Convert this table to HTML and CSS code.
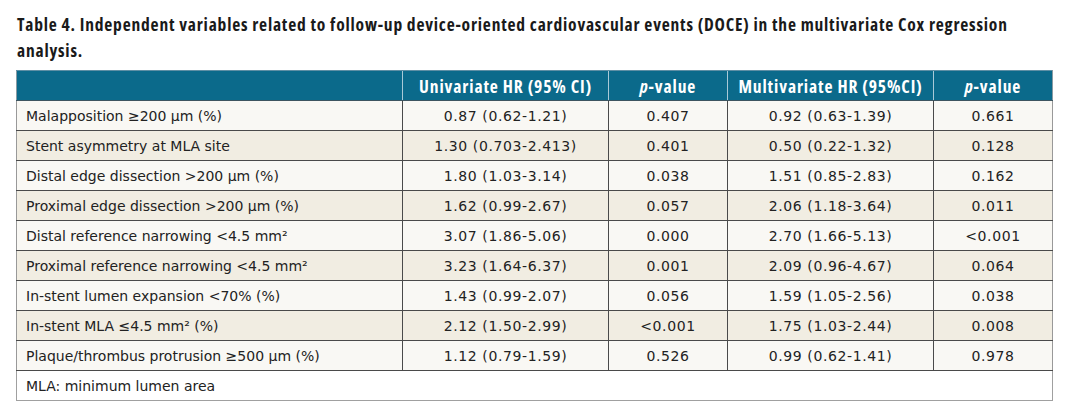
FILE: index.html
```html
<!DOCTYPE html>
<html>
<head>
<meta charset="utf-8">
<link rel="stylesheet" href="styles.css">
</head>
<body>
<div class="page">
  <h1 class="title">Table 4. Independent variables related to follow-up device-oriented cardiovascular events (DOCE) in the multivariate Cox regression analysis.</h1>
  <table class="tbl">
    <colgroup>
      <col class="c-var"><col class="c-hr"><col class="c-p"><col class="c-hr"><col class="c-p">
    </colgroup>
    <thead>
      <tr>
        <th></th>
        <th>Univariate HR (95% CI)</th>
        <th><i>p</i>-value</th>
        <th>Multivariate HR (95%CI)</th>
        <th><i>p</i>-value</th>
      </tr>
    </thead>
    <tbody>
      <tr><td>Malapposition ≥200 µm (%)</td><td>0.87 (0.62-1.21)</td><td>0.407</td><td>0.92 (0.63-1.39)</td><td>0.661</td></tr>
      <tr><td>Stent asymmetry at MLA site</td><td>1.30 (0.703-2.413)</td><td>0.401</td><td>0.50 (0.22-1.32)</td><td>0.128</td></tr>
      <tr><td>Distal edge dissection &gt;200 µm (%)</td><td>1.80 (1.03-3.14)</td><td>0.038</td><td>1.51 (0.85-2.83)</td><td>0.162</td></tr>
      <tr><td>Proximal edge dissection &gt;200 µm (%)</td><td>1.62 (0.99-2.67)</td><td>0.057</td><td>2.06 (1.18-3.64)</td><td>0.011</td></tr>
      <tr><td>Distal reference narrowing &lt;4.5 mm²</td><td>3.07 (1.86-5.06)</td><td>0.000</td><td>2.70 (1.66-5.13)</td><td>&lt;0.001</td></tr>
      <tr><td>Proximal reference narrowing &lt;4.5 mm²</td><td>3.23 (1.64-6.37)</td><td>0.001</td><td>2.09 (0.96-4.67)</td><td>0.064</td></tr>
      <tr><td>In-stent lumen expansion &lt;70% (%)</td><td>1.43 (0.99-2.07)</td><td>0.056</td><td>1.59 (1.05-2.56)</td><td>0.038</td></tr>
      <tr><td>In-stent MLA ≤4.5 mm² (%)</td><td>2.12 (1.50-2.99)</td><td>&lt;0.001</td><td>1.75 (1.03-2.44)</td><td>0.008</td></tr>
      <tr><td>Plaque/thrombus protrusion ≥500 µm (%)</td><td>1.12 (0.79-1.59)</td><td>0.526</td><td>0.99 (0.62-1.41)</td><td>0.978</td></tr>
    </tbody>
    <tfoot>
      <tr><td colspan="5">MLA: minimum lumen area</td></tr>
    </tfoot>
  </table>
</div>
</body>
</html>
```
FILE: styles.css
```css
html, body {
  margin: 0;
  padding: 0;
  background: #ffffff;
}
.page {
  padding: 11px 17px 0 16px;
  width: 1036px;
}
.title {
  margin: 0 0 7px 1px;
  font-family: "Open Sans", sans-serif;
  font-stretch: 75%;
  font-weight: bold;
  font-size: 17.5px;
  letter-spacing: 0.8px;
  line-height: 26px;
  color: #1a1a1a;
}
.tbl {
  border-collapse: collapse;
  width: 1036px;
  table-layout: fixed;
  font-family: "DejaVu Sans", sans-serif;
  font-size: 14px;
  color: #222;
}
.c-var { width: 386px; }
.c-hr { width: 206px; }
.c-p { width: 119px; }
.tbl th {
  background: #0b6a8b;
  color: #ffffff;
  height: 29px;
  padding: 0;
  font-family: "Open Sans", sans-serif;
  font-stretch: 75%;
  font-weight: bold;
  font-size: 17.5px;
  letter-spacing: 0.9px;
  text-align: center;
  border-left: 1px solid #a9c9d7;
  border-top: 1px solid #5f8fa5;
  border-bottom: 1px solid #3d5560;
}
.tbl th:first-child { border-left: 1px solid #8a9ba3; }
.tbl th:last-child { border-right: 1px solid #8a9ba3; }
.tbl td {
  height: 29px;
  padding: 0;
  text-align: center;
  letter-spacing: 0.6px;
  border: 1px solid #4a4a4a;
}
.tbl tbody td:first-child {
  text-align: left;
  letter-spacing: 0;
  padding-left: 9px;
  border-left-color: #999;
}
.tbl tbody td:last-child { border-right-color: #999; }
.tbl tbody tr:nth-child(odd) td { background: #f9f8f4; }
.tbl tbody tr:nth-child(even) td { background: #f1ede2; }
.tbl tfoot td {
  text-align: left;
  letter-spacing: 0;
  padding-left: 9px;
  background: #ffffff;
  border: 1px solid #a0a0a0;
  border-top-color: #4a4a4a;
}
```
